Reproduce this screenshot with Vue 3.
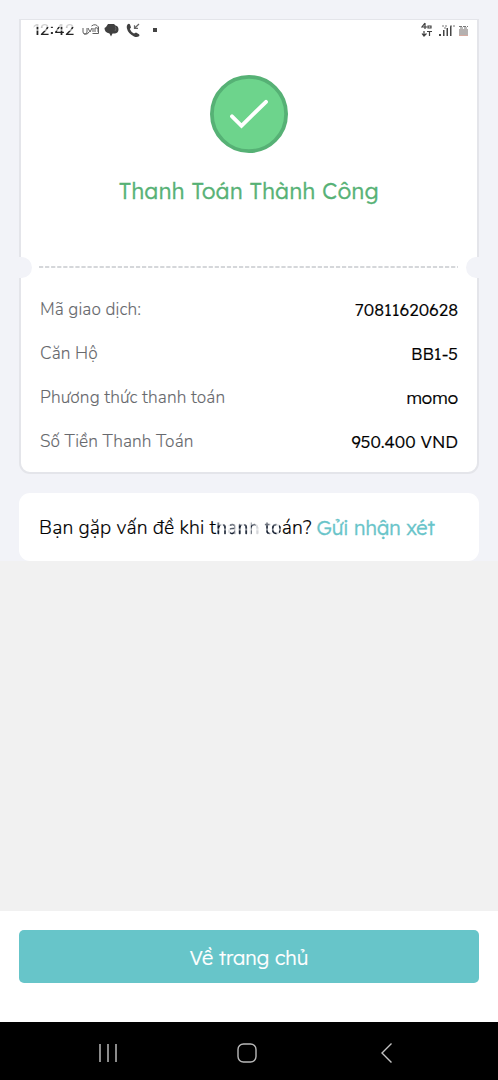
<script setup>
const rows = [
  { label: 'Mã giao dịch:', value: '70811620628' },
  { label: 'Căn Hộ', value: 'BB1-5' },
  { label: 'Phương thức thanh toán', value: 'momo' },
  { label: 'Số Tiền Thanh Toán', value: '950.400 VND' },
]
</script>

<template>
  <div class="screen">
    <main class="content">
      <section class="receipt">
        <div class="status">
          <div class="status-left">
            <span class="time">12:42</span>
            <svg class="uvin" width="18" height="12" viewBox="0 0 18 12" fill="none" stroke="#606060" stroke-width="1">
              <path d="M1 4v4q0 2 2 2t2-2V4M2 10q4 1 5-2M6 4l2 4 2-4M11 8V4M13 8V4q3-1 3 1v3M9.500 2q4-3 7 1v6.500h-6" />
            </svg>
            <svg class="chat" width="15" height="15" viewBox="0 0 15 15">
              <path d="M4 1h6l1.500 1.500q3 .5 3 4T11 10.500H8.500L7 13.500 5.500 10.500Q.500 9.500 .500 5L2 4z" fill="#404040" />
              <path d="M11.300 3.500q1.500 2.500-.3 4.500" fill="none" stroke="#777" stroke-width=".7" />
            </svg>
            <svg class="call" width="15" height="15" viewBox="0 0 15 15">
              <path d="M1.500 1.500Q3 0 4 1.500L5 4.500 3.800 6Q5 9 8 10.500L10 9.500l3 1.700q1 .8 0 2-2 1.500-5 .3Q2 10.500 .800 5 .500 2.500 1.500 1.500z" fill="#404040" />
              <path d="M13 1 8.500 5.300M8.500 2.300v3h3.500" fill="none" stroke="#666" stroke-width="1.200" />
            </svg>
            <i class="dot"></i>
          </div>
          <svg class="status-right" width="48" height="16" viewBox="0 0 48 16">
            <path d="M4 1 1 5h5M4 1v6M7 4h3v2H7zM3 9v5M1 11.500 3 14l2.500-2.500M6 9.500h5M8.500 9v5" fill="none" stroke="#404040" stroke-width="1.200" />
            <path d="M18 12h2v2h-2zM22 8h1.500v6H22zM25.500 6H27v8h-1.500zM29 4h1.500v10H29z" fill="#454545" />
            <path d="M21 4h5M23 6h3M29 4h5" fill="none" stroke="#777" stroke-dasharray="2 1" />
            <path d="M38 7h9v7h-9z" fill="#b5b1b0" />
            <path d="M38 4.500h9M39 6h7" stroke="#777" stroke-dasharray="3 1" />
            <path d="M38 13.500h9" stroke="#d5aaa0" />
          </svg>
        </div>
        <svg class="check" width="78" height="78" viewBox="0 0 78 78" fill="none">
          <circle cx="39" cy="39" r="37.100" fill="#6dd48c" stroke="#56b175" stroke-width="3.800" />
          <path d="M22 41.300 31.500 50.800 56 26.800" stroke="#fff" stroke-width="3.900" stroke-linecap="round" />
        </svg>
        <h1>Thanh Toán Thành Công</h1>
        <div class="divider">
          <i class="notch left"></i>
          <svg width="420" height="2"><path d="M0 1h419" stroke="#d5d7da" stroke-width="2" stroke-dasharray="4.200 1.860" /></svg>
          <i class="notch right"></i>
        </div>
        <dl>
          <div v-for="row in rows" :key="row.label" class="row">
            <dt>{{ row.label }}</dt>
            <dd>{{ row.value }}</dd>
          </div>
        </dl>
      </section>
      <section class="help">
        <span>Bạn gặp vấn đề khi t</span>
        <span class="faded">hanh to</span>
        <span>án?</span>
        <a>Gửi nhận xét</a>
      </section>
    </main>
    <footer>
      <button>Về trang chủ</button>
    </footer>
    <nav>
      <svg width="20" height="20" viewBox="0 0 20 20" stroke="#b9b9b9" stroke-width="1.500"><path d="M2 1v18M10 1v18M18 1v18" /></svg>
      <svg class="home" width="20" height="20" viewBox="0 0 20 20" fill="none" stroke="#b9b9b9" stroke-width="1.400"><rect x="1" y="1" width="18" height="18" rx="5.500" /></svg>
      <svg width="20" height="20" viewBox="0 0 20 20" fill="none" stroke="#c4c4c4" stroke-width="1.400"><path d="M14.500 .500 5 10l9.500 9.500" /></svg>
    </nav>
  </div>
</template>

<style>
body { margin: 0; }
</style>

<style scoped>
* { box-sizing: border-box; }
.screen {
  width: 498px;
  height: 1080px;
  display: flex;
  flex-direction: column;
  background: #f1f1f1;
  font-family: Nunito, Lato, "Noto Sans", sans-serif;
  overflow: hidden;
}
.content {
  height: 561px;
  flex: none;
  padding: 19px 19px 0;
  background: #f2f3f8;
}
.receipt {
  height: 455px;
  display: flex;
  flex-direction: column;
  align-items: center;
  background: #fff;
  border: 2px solid #e4e5ea;
  border-width: 1px 2px 2px;
  border-radius: 0 0 11px 11px;
}
.status {
  width: 100%;
  height: 20px;
  padding: 2px 8px 0 12px;
  display: flex;
  justify-content: space-between;
}
.status-left { display: flex; align-items: center; height: 16px; }
.time {
  width: 42px;
  font: 500 16px/16px Inter, sans-serif;
  color: #222;
  transform: scaleY(.88);
  mask-image: linear-gradient(#0003 0 4px, #000 5px 7px, #0007 7px 9px, #000 9px);
}
.uvin { margin-left: 7px; }
.chat { margin-left: 4px; }
.call { margin-left: 7px; }
.dot { width: 4px; height: 4px; margin-left: 12px; background: #444; }
.check { margin-top: 35px; flex: none; }
h1 {
  margin: 22px 0 0;
  height: 32px;
  font: 300 22px/32px Lexend, Lato, sans-serif;
  letter-spacing: .48px;
  -webkit-text-stroke: .4px;
  color: #56b175;
  white-space: nowrap;
}
.divider {
  width: 458px;
  height: 22px;
  margin-top: 49px;
  display: flex;
  align-items: center;
  justify-content: space-between;
  flex: none;
}
.notch { width: 12px; height: 21px; background: #f2f3f8; box-shadow: -2px 0 #f2f3f8; }
.left { border-radius: 0 11px 11px 0; }
.right { border-radius: 11px 0 0 11px; box-shadow: 2px 0 #f2f3f8; }
dl { width: 418px; margin: 9px 0 0; }
.row { height: 44px; display: flex; align-items: center; justify-content: space-between; }
dt { font-size: 17.3px; font-weight: 300; letter-spacing: .1px; -webkit-text-stroke: .1px; color: #67696d; position: relative; top: .5px; }
dd { margin: 0; font: 300 17px Lexend, Lato, sans-serif; -webkit-text-stroke: .2px; color: #000; }
.help {
  height: 68px;
  margin-top: 19px;
  padding-left: 20px;
  display: flex;
  align-items: center;
  background: #fff;
  border-radius: 11px;
  font-size: 19.4px;
  font-weight: 300;
  letter-spacing: .15px;
  -webkit-text-stroke: .15px;
  color: #000;
  white-space: nowrap;
}
.faded {
  color: #101a2c;
  -webkit-text-stroke: .5px;
  mask-image: linear-gradient(#0000 0 8px, #0009 9px 11px, #000 12px 14px, #0008 15px 16px, #000 17px), repeating-linear-gradient(90deg, #000 0 4px, #0003 5px 7px);
  mask-composite: intersect;
}
a { margin: 1px 0 0 5px; color: #68c4c9; font: 300 19.900px Lexend, Lato, sans-serif; letter-spacing: 0; -webkit-text-stroke: .35px; }
footer { height: 111px; flex: none; margin-top: 350px; padding: 19px 19px 0; background: #fff; }
button {
  width: 460px;
  height: 53px;
  padding: 2px 0 0;
  border: 0;
  border-radius: 5px;
  background: #67c5c9;
  color: #fff;
  font: 300 19.900px Lexend, Lato, sans-serif;
  -webkit-text-stroke: .15px;
}
nav {
  height: 58px;
  flex: none;
  padding: 3px 101px 0 98px;
  background: #000;
  display: flex;
  align-items: center;
  justify-content: space-between;
}
.home { margin-right: 1px; }
</style>
